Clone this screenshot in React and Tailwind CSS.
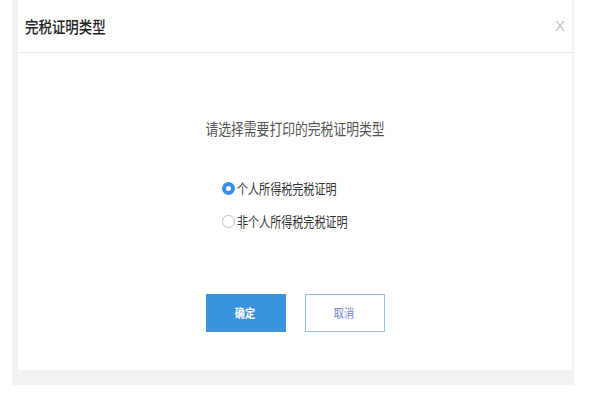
import React, { useState } from 'react';

const cjk = { fontFamily: '"Noto Sans CJK SC", "Noto Sans", sans-serif' };

function Radio({ checked, label, onClick }) {
    return (
        <button onClick={onClick} className="flex items-center h-[20px] text-left">
            {checked ? (
                <span className="w-[13px] h-[13px] rounded-full border-[4px] border-[#3d8fe6] bg-white flex-shrink-0" />
            ) : (
                <span className="w-[13px] h-[13px] rounded-full border-[1.5px] border-[#bdbdbd] bg-white flex-shrink-0" />
            )}
            <span className="ml-[2px] inline-block origin-left scale-x-[0.79] text-[14px] leading-[20px] text-[#333] whitespace-nowrap">{label}</span>
        </button>
    );
}

export default function App() {
    const [type, setType] = useState('personal');

    return (
        <div className="w-[600px] h-[400px] bg-white" style={cjk}>
            {/* Dialog frame */}
            <div className="ml-[12px] w-[562px] h-[385px] bg-[#f1f2f4] pl-[6px] pr-[2px] pb-[15px] flex flex-col">
                {/* Header */}
                <div className="h-[53px] bg-white border-b border-[#e3e7ee] flex items-center justify-between pl-[7px] pr-[7px] flex-shrink-0">
                    <h2 className="inline-block origin-left scale-x-[0.84] text-[16px] text-[#222] font-medium whitespace-nowrap">完税证明类型</h2>
                    <span className="text-[15px] font-light text-[#c4c4c4]" style={{ fontFamily: '"Liberation Sans", sans-serif' }}>X</span>
                </div>

                {/* Body */}
                <div className="flex-1 bg-white flex flex-col">
                    <div className="mt-[65px] h-[20px] flex justify-center">
                        <p className="inline-block scale-x-[0.8] leading-[20px] text-[16px] text-[#555] whitespace-nowrap">
                            请选择需要打印的完税证明类型
                        </p>
                    </div>

                    <div className="mt-[40px] pl-[204px] flex flex-col gap-[13px]">
                        <Radio checked={type === 'personal'} label="个人所得税完税证明" onClick={() => setType('personal')} />
                        <Radio checked={type === 'other'} label="非个人所得税完税证明" onClick={() => setType('other')} />
                    </div>

                    <div className="mt-[63px] flex justify-center gap-[19px]">
                        <button className="w-[80px] h-[38px] bg-[#3a93dd] text-white text-[12px] font-bold">
                            <span className="inline-block scale-x-[0.85]">确定</span>
                        </button>
                        <button className="w-[80px] h-[38px] bg-white border border-[#93c1ec] text-[#6d7fd6] text-[12px]">
                            <span className="inline-block scale-x-[0.85]">取消</span>
                        </button>
                    </div>
                </div>
            </div>
        </div>
    );
}
